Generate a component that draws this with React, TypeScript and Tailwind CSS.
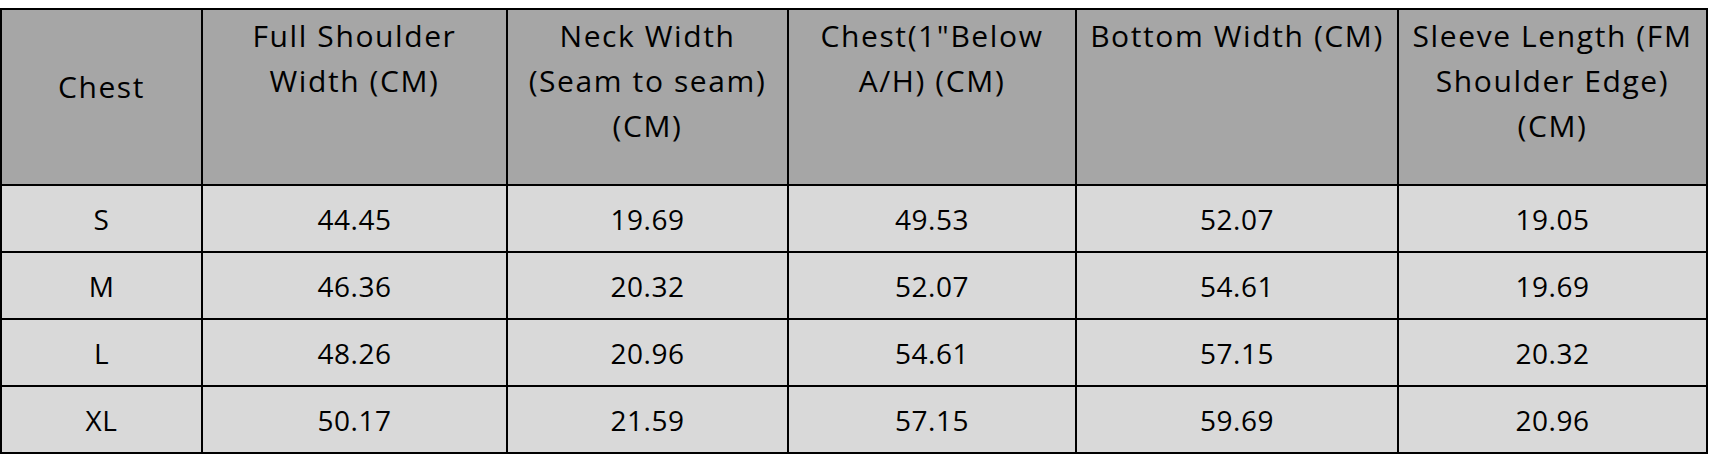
const headers: React.ReactNode[] = [
  "Chest",
  <>Full Shoulder<br />Width (CM)</>,
  <>Neck Width<br />(Seam to seam)<br />(CM)</>,
  <>Chest(1"Below<br />A/H) (CM)</>,
  <>Bottom Width (CM)</>,
  <>Sleeve Length (FM<br />Shoulder Edge)<br />(CM)</>,
]

const widths = [201, 305, 281, 288, 322, 309]

const rows = [
  ["S", "44.45", "19.69", "49.53", "52.07", "19.05"],
  ["M", "46.36", "20.32", "52.07", "54.61", "19.69"],
  ["L", "48.26", "20.96", "54.61", "57.15", "20.32"],
  ["XL", "50.17", "21.59", "57.15", "59.69", "20.96"],
]

export default function App() {
  return (
    <div className="h-[462px] w-[1710px] bg-white pt-2 text-black" style={{ fontFamily: '"Open Sans", sans-serif' }}>
      <table className="w-[1708px] table-fixed border-collapse">
        <colgroup>
          {widths.map((w, i) => (
            <col key={i} style={{ width: w }} />
          ))}
        </colgroup>
        <thead>
          <tr className="h-[176px] bg-[#a6a6a6] text-[30px] leading-[45px] tracking-[1.6px]">
            {headers.map((h, i) => (
              <th
                key={i}
                className={
                  i === 0
                    ? "border-2 border-black px-0 pb-[22px] text-center align-middle font-normal"
                    : "border-2 border-black px-0 pt-[3px] text-center align-top font-normal"
                }
              >
                {h}
              </th>
            ))}
          </tr>
        </thead>
        <tbody>
          {rows.map((r) => (
            <tr key={r[0]} className="h-[67px] bg-[#d9d9d9] text-[28px] leading-[40px] tracking-[0.5px]">
              {r.map((c, i) => (
                <td key={i} className="border-2 border-black text-center align-middle">
                  {c}
                </td>
              ))}
            </tr>
          ))}
        </tbody>
      </table>
    </div>
  )
}
